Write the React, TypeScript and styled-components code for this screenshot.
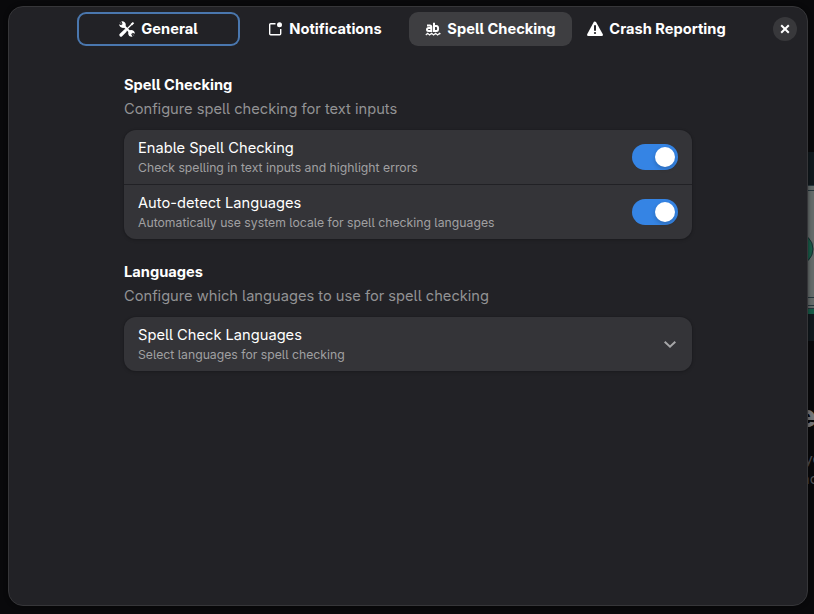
import React from "react";
import styled, { createGlobalStyle, css } from "styled-components";

const GlobalStyle = createGlobalStyle`
  * { box-sizing: border-box; }
  html, body, #root { height: 100%; }
  body {
    margin: 0;
    overflow: hidden;
    background: #09090b;
    color: #fff;
    font-family: Inter, "Noto Sans", sans-serif;
    font-size: 14.66px;
    font-feature-settings: "cv05" 1;
  }
`;

const Window = styled.div`
  position: relative;
  width: 814px;
  height: 614px;
  overflow: hidden;
  padding: 6px 6px 8px 8px;
`;

const Illustration = styled.svg`
  position: absolute;
  left: 800px;
  top: 152px;
`;

const BackdropText = styled.div<{ $x: number; $y: number; $size: number; $bold?: boolean }>`
  position: absolute;
  left: ${(p) => p.$x}px;
  top: ${(p) => p.$y}px;
  font-size: ${(p) => p.$size}px;
  font-weight: ${(p) => (p.$bold ? 800 : 400)};
  line-height: 1.2;
  color: ${(p) => (p.$bold ? "#77777a" : "#505053")};
  white-space: nowrap;
`;

const Dialog = styled.main`
  position: relative;
  width: 800px;
  height: 600px;
  border: 1px solid #363639;
  border-radius: 15px;
  background: #222226;
  box-shadow: 0 0 4px rgba(0, 0, 0, 0.5);
`;

const Header = styled.header`
  display: flex;
  align-items: center;
  height: 44px;
  padding: 0 10px 0 68px;
`;

const Tabs = styled.nav`
  display: flex;
  gap: 3px;
`;

const Tab = styled.button<{ $state?: "focus" | "active" }>`
  display: flex;
  align-items: center;
  justify-content: center;
  gap: 6px;
  width: 163px;
  height: 34px;
  padding: 0;
  border: 0;
  border-radius: 9px;
  background: transparent;
  color: #fff;
  font: inherit;
  font-weight: 700;
  font-feature-settings: inherit;
  white-space: nowrap;
  svg { flex: none; }
  ${(p) => p.$state === "active" && css`background: #3e3e41;`}
  ${(p) => p.$state === "focus" && css`box-shadow: inset 0 0 0 2px #4a77ae;`}
`;

const CloseButton = styled.button`
  display: grid;
  place-items: center;
  width: 24px;
  height: 24px;
  margin-left: auto;
  padding: 0;
  border: 0;
  border-radius: 50%;
  background: #38383b;
  color: #fff;
`;

const Content = styled.div`
  width: 568px;
  margin: 24px 0 0 115px;
`;

const Group = styled.section`
  margin-bottom: 23px;
`;

const GroupTitle = styled.h2`
  margin: 0;
  height: 20px;
  font-size: 14.66px;
  line-height: 20px;
  font-weight: 700;
`;

const GroupDescription = styled.p`
  margin: 4px 0 11px;
  line-height: 20px;
  color: #929294;
`;

const Card = styled.div`
  border-radius: 12px;
  overflow: hidden;
  background: #343438;
  box-shadow: 0 1px 3px 1px rgba(0, 0, 6, 0.13), 0 0 0 1px rgba(0, 0, 6, 0.05);
`;

const Row = styled.div`
  display: flex;
  align-items: center;
  justify-content: space-between;
  height: 54px;
  padding: 0 14px;
  & + & {
    height: 55px;
    border-top: 1px solid #212125;
  }
`;

const RowTitle = styled.div`
  line-height: 18px;
`;

const RowSubtitle = styled.div`
  margin-top: 3px;
  font-size: 12.22px;
  line-height: 16px;
  color: #a0a0a2;
`;

const Switch = styled.div`
  display: flex;
  justify-content: flex-end;
  width: 46px;
  height: 26px;
  padding: 3px;
  border-radius: 13px;
  background: #3584e4;
`;

const Knob = styled.div`
  width: 20px;
  height: 20px;
  border-radius: 50%;
  background: #fff;
  box-shadow: 0 2px 4px rgba(0, 0, 6, 0.2);
`;

const Chevron = styled.svg`
  display: block;
`;

const ToolsIcon = () => (
  <svg width="16" height="16" viewBox="0 0 16 16" fill="none" stroke="currentColor">
    <path d="M2 14 6.2 9.8" strokeWidth="3.2" strokeLinecap="round" />
    <path d="M6 10 13 3" strokeWidth="1.2" />
    <path d="m11.6 3.1 2.2-2.2 1.4 1.4L13 4.5Z" fill="currentColor" stroke="none" />
    <path d="m5 5 6 6" strokeWidth="2.2" />
    <path d="M1 1.2 3.2 3.4 3.5 2.8 2.4.3C4.4-.2 6.8 1.3 6.8 3.7 6.8 5.5 5.7 6.9 4 6.9 1.8 6.9 0 5.2.1 3.2L2.2 4.3 3 3.6.7 1.5Z" fill="currentColor" stroke="none" />
    <path d="M15 14.8 12.8 12.6 12.2 13.3 13.5 15.7C11.4 16.2 9.1 14.6 9.2 12.3 9.2 10.4 10.4 9.1 12.1 9.1 14.3 9.1 16 10.8 15.8 12.8L13.7 11.7 13 12.4 15.2 14.5Z" fill="currentColor" stroke="none" />
  </svg>
);

const NotificationIcon = () => (
  <svg width="16" height="16" viewBox="0 0 16 16" fill="none">
    <path d="M8.5 2.8H3.7Q2.7 2.8 2.7 3.8v9q0 1 1 1h9q1 0 1-1V8" stroke="currentColor" strokeWidth="1.4" />
    <circle cx="12.5" cy="3.8" r="2.5" fill="currentColor" />
  </svg>
);

const SpellIcon = () => (
  <svg width="16" height="16" viewBox="0 0 16 16" fill="none" stroke="currentColor">
    <path d="M2 4.4h2.8q1.5 0 1.5 1.5v5M6.3 7H3.7Q2 7 2 8.5T3.7 10h2.6" strokeWidth="2" />
    <path d="M9 1.8V11M9 5h2.5q1.6 0 1.6 2.5T11.500 10H9" strokeWidth="2" />
    <path d="m.8 14 1.8-1.7L4.6 14l2-1.7 2 1.700 2-1.700 2 1.700 2-1.700.8.7" strokeWidth="1.1" />
  </svg>
);

const WarningIcon = () => (
  <svg width="16" height="16" viewBox="0 0 16 16">
    <path d="M6.9.8Q8 0 9 1l6.700 12q.8 2-1 2H1.300q-1.800 0-1-2L6.900.8Z" fill="currentColor" />
    <path d="M8 5v4" stroke="#222226" strokeWidth="2" strokeLinecap="round" />
    <circle cx="8" cy="12" r="1.1" fill="#222226" />
  </svg>
);

const settings = [
  { title: "Enable Spell Checking", detail: "Check spelling in text inputs and highlight errors" },
  { title: "Auto-detect Languages", detail: "Automatically use system locale for spell checking languages" },
];

export default function App() {
  return (
    <>
      <GlobalStyle />
      <Window>
        <Illustration width="14" height="189" viewBox="0 0 14 189">
          <path d="M0 0h14v189H0z" fill="#11191d" />
          <path d="M0 33h14v126H0z" fill="#646b6a" />
          <path d="M0 33.5h14M0 38.5h14M0 145.5h14M0 153.5h14M0 156.5h14" stroke="#26363c" />
          <circle cx="-3" cy="97" r="16" fill="#185c48" stroke="#172e31" />
          <path d="M0 157h14v5H0z" fill="#165b47" />
        </Illustration>
        <BackdropText $x={798} $y={398} $size={30} $bold>e</BackdropText>
        <BackdropText $x={804.5} $y={451} $size={14.66}>ye</BackdropText>
        <BackdropText $x={801} $y={471} $size={14.66}>no</BackdropText>
        <Dialog>
          <Header>
            <Tabs>
              <Tab $state="focus"><ToolsIcon />General</Tab>
              <Tab><NotificationIcon />Notifications</Tab>
              <Tab $state="active"><SpellIcon />Spell Checking</Tab>
              <Tab><WarningIcon />Crash Reporting</Tab>
            </Tabs>
            <CloseButton aria-label="Close">
              <svg width="10" height="10" viewBox="0 0 10 10">
                <path d="m1.200 1.200 7.600 7.600m0-7.600-7.600 7.600" stroke="currentColor" strokeWidth="2" />
              </svg>
            </CloseButton>
          </Header>
          <Content>
            <Group>
              <GroupTitle>Spell Checking</GroupTitle>
              <GroupDescription>Configure spell checking for text inputs</GroupDescription>
              <Card>
                {settings.map((s) => (
                  <Row key={s.title}>
                    <div>
                      <RowTitle>{s.title}</RowTitle>
                      <RowSubtitle>{s.detail}</RowSubtitle>
                    </div>
                    <Switch role="switch" aria-checked="true"><Knob /></Switch>
                  </Row>
                ))}
              </Card>
            </Group>
            <Group>
              <GroupTitle>Languages</GroupTitle>
              <GroupDescription>Configure which languages to use for spell checking</GroupDescription>
              <Card>
                <Row>
                  <div>
                    <RowTitle>Spell Check Languages</RowTitle>
                    <RowSubtitle>Select languages for spell checking</RowSubtitle>
                  </div>
                  <Chevron width="16" height="16" viewBox="0 0 16 16" fill="none">
                    <path d="m2.700 5.700 5.300 5 5.300-5" stroke="#a6a6a8" strokeWidth="2" />
                  </Chevron>
                </Row>
              </Card>
            </Group>
          </Content>
        </Dialog>
      </Window>
    </>
  );
}
